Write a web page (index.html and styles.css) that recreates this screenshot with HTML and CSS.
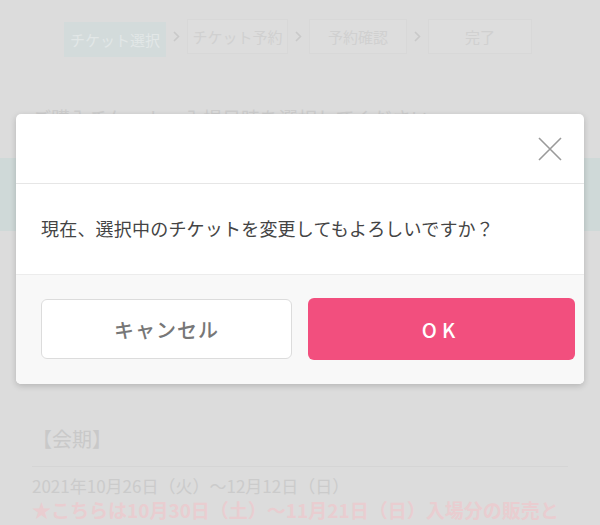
FILE: index.html
```html
<!DOCTYPE html>
<html lang="ja">
<head>
<meta charset="utf-8">
<link rel="stylesheet" href="styles.css">
</head>
<body>
<div class="page">
  <nav class="steps">
    <span class="step active">チケット選択</span>
    <span class="chev"><svg width="7" height="11" viewBox="0 0 7 11"><path d="M1 1l4.5 4.5L1 10" fill="none" stroke="#c9c9c9" stroke-width="1.6"/></svg></span>
    <span class="step w2">チケット予約</span>
    <span class="chev"><svg width="7" height="11" viewBox="0 0 7 11"><path d="M1 1l4.5 4.5L1 10" fill="none" stroke="#c9c9c9" stroke-width="1.6"/></svg></span>
    <span class="step w3">予約確認</span>
    <span class="chev"><svg width="7" height="11" viewBox="0 0 7 11"><path d="M1 1l4.5 4.5L1 10" fill="none" stroke="#c9c9c9" stroke-width="1.6"/></svg></span>
    <span class="step w4">完了</span>
  </nav>
  <p class="title">ご購入チケット　入場日時を選択してください</p>
  <div class="band"></div>
  <h2 class="term">【会期】</h2>
  <p class="date">2021年10月26日（火）～12月12日（日）</p>
  <p class="note">★こちらは10月30日（土）～11月21日（日）入場分の販売と</p>
</div>

<div class="modal">
  <div class="modal-head">
    <button class="close" aria-label="閉じる"><svg width="24" height="24" viewBox="0 0 24 24"><path d="M1 1L23 23M23 1L1 23" stroke="#9a9a9a" stroke-width="1.6" fill="none"/></svg></button>
  </div>
  <div class="modal-body">現在、選択中のチケットを変更してもよろしいですか？</div>
  <div class="modal-foot">
    <button class="btn cancel">キャンセル</button>
    <button class="btn ok">OK</button>
  </div>
</div>
</body>
</html>
```

FILE: styles.css
```css
* { box-sizing: border-box; }
html, body { margin: 0; padding: 0; }
body {
  width: 600px;
  height: 525px;
  overflow: hidden;
  background: #dcdcdc;
  font-family: "Noto Sans CJK JP", "Noto Sans", sans-serif;
  position: relative;
}
.page { padding-top: 19px; }
.steps {
  display: flex;
  align-items: center;
  padding-left: 64px;
  height: 35px;
}
.step {
  height: 35px;
  width: 101px;
  display: flex;
  align-items: center;
  justify-content: center;
  font-size: 15px;
  color: #d0d0d0;
  border: 1px solid #d8d8d8;
  background: #dddddd;
}
.step.active {
  width: 102px;
  background: #d3dbdb;
  border-color: #d3dbdb;
  color: #e2e7e7;
  margin-top: 6px;
}
.step.w3 { width: 98px; }
.step.w4 { width: 104px; }
.chev {
  width: 21px;
  display: flex;
  justify-content: center;
  align-items: center;
}
.title {
  margin: 51px 0 0 32px;
  font-size: 19px;
  line-height: 26px;
  color: #cdcdcd;
}
.band {
  margin-top: 27px;
  height: 73px;
  background: #cfd9d8;
}
.term {
  margin: 194px 32px 0;
  font-size: 20px;
  font-weight: 400;
  line-height: 28px;
  color: #c9c9c9;
  padding-bottom: 13px;
  border-bottom: 1px solid #d5d5d5;
}
.date {
  margin: 7px 0 0 32px;
  font-size: 17px;
  line-height: 24px;
  color: #cbcbcb;
}
.note {
  margin: 0 0 0 32px;
  font-size: 19px;
  line-height: 24px;
  font-weight: 700;
  color: #e9cdd0;
  white-space: nowrap;
}

.modal {
  position: absolute;
  left: 16px;
  top: 114px;
  width: 568px;
  height: 270px;
  background: #fff;
  border-radius: 5px;
  box-shadow: 0 2px 6px rgba(0,0,0,0.18);
  overflow: hidden;
  display: flex;
  flex-direction: column;
}
.modal-head {
  height: 70px;
  border-bottom: 1px solid #e6e6e6;
  display: flex;
  justify-content: flex-end;
  align-items: center;
  padding-right: 22px;
}
.close {
  border: 0;
  background: none;
  padding: 0;
  width: 24px;
  height: 24px;
  display: block;
}
.close svg { display: block; }
.modal-body {
  height: 91px;
  border-bottom: 1px solid #ececec;
  display: flex;
  align-items: center;
  padding-left: 25px;
  padding-bottom: 2px;
  font-size: 18px;
  letter-spacing: 0.2px;
  color: #444;
}
.modal-foot {
  flex: 1;
  background: #f8f8f8;
  display: grid;
  grid-template-columns: 251px 267px;
  column-gap: 16px;
  padding: 23px 0 0 25px;
  align-items: start;
}
.btn {
  height: 62px;
  border-radius: 6px;
  font-family: "Noto Sans CJK JP", "Noto Sans", sans-serif;
  font-size: 20px;
  font-weight: 500;
  cursor: pointer;
}
.cancel {
  margin-top: 1px;
  height: 60px;
  background: #fff;
  border: 1px solid #dcdcdc;
  color: #777;
  letter-spacing: 1px;
}
.ok {
  background: #f24f7e;
  border: 0;
  color: #fff;
  letter-spacing: 5px;
  padding-left: 5px;
}
```
